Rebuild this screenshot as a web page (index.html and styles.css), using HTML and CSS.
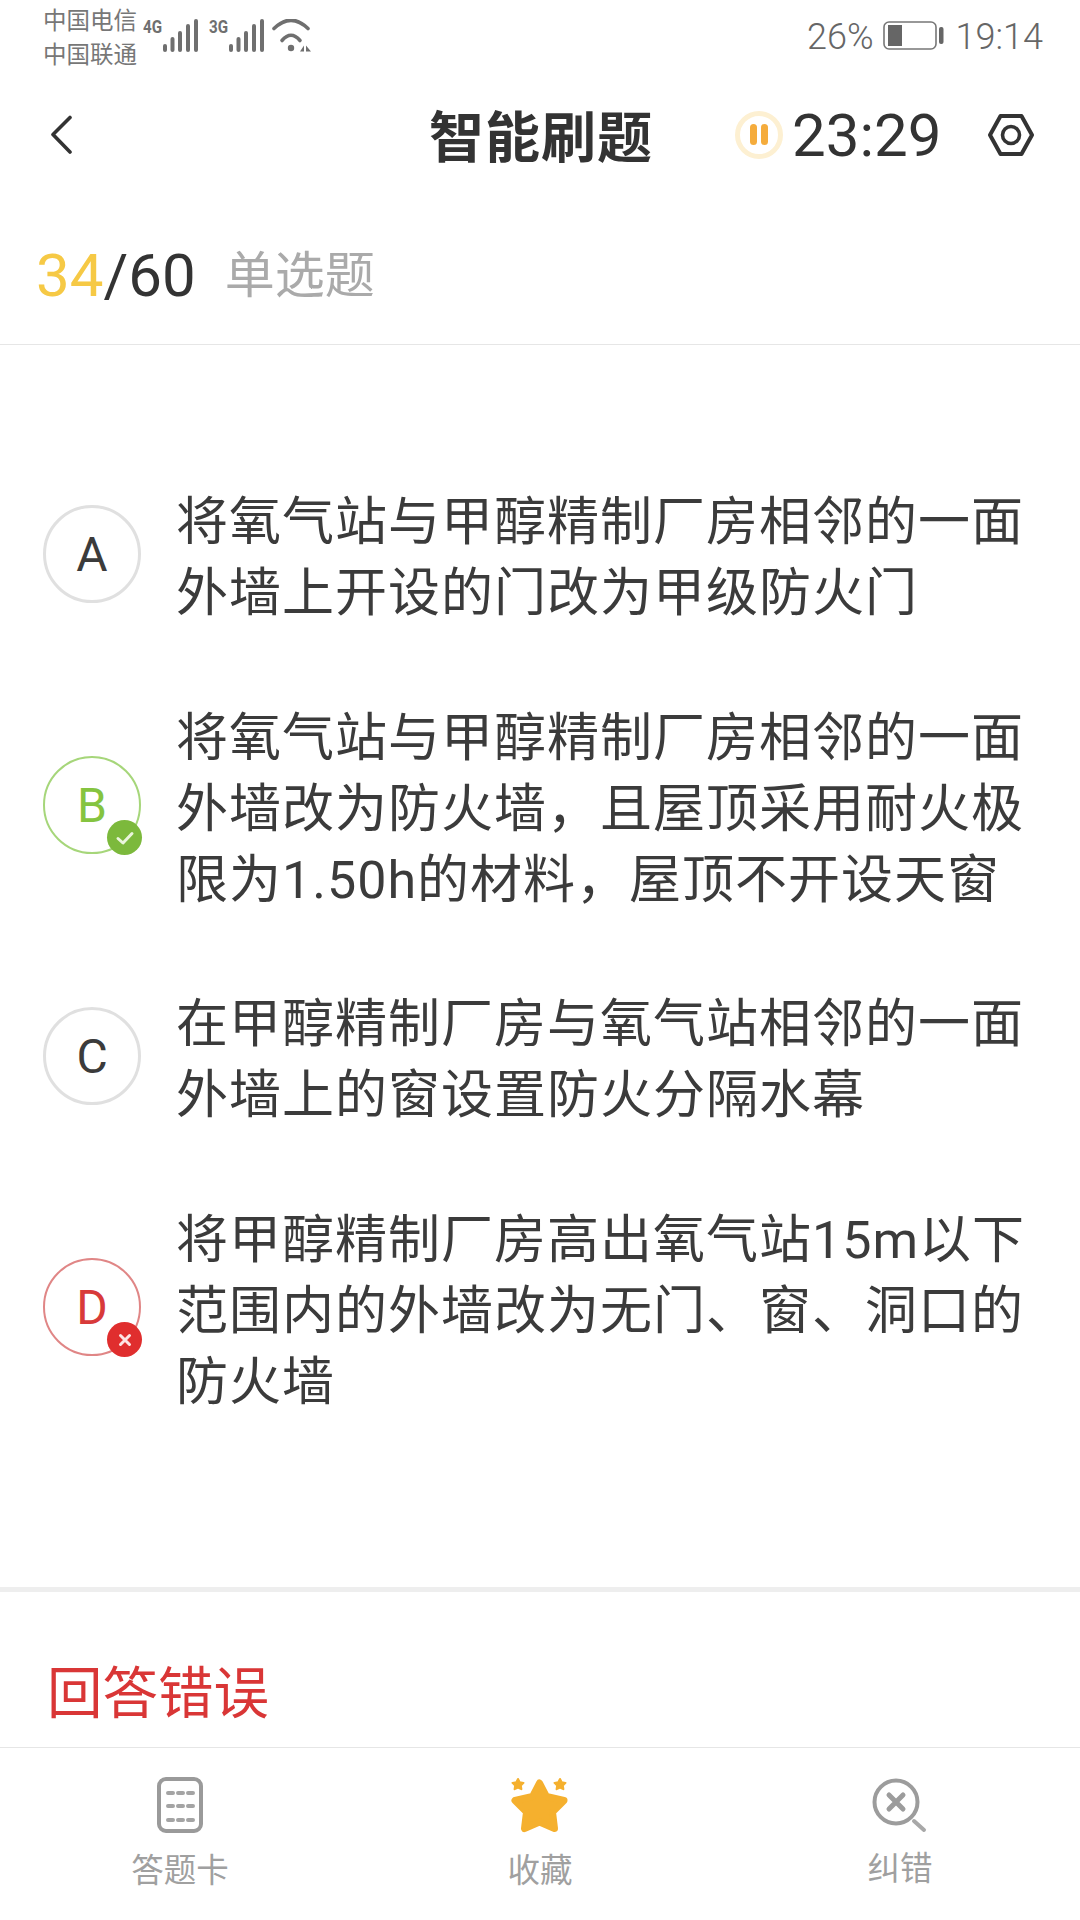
FILE: index.html
```html
<!DOCTYPE html>
<html lang="zh-CN">
<head>
<meta charset="utf-8">
<title>智能刷题</title>
<link rel="stylesheet" href="styles.css">
</head>
<body>
<div class="page">
  <div class="status">
    <div class="carriers"><span>中国电信</span><span>中国联通</span></div>
    <div class="net">
      <span class="gen">4G</span>
      <svg class="sig" width="38" height="36" viewBox="0 0 38 36"><g fill="#6f6f6f"><rect x="2" y="25" width="4" height="8" rx="2"/><rect x="9.500" y="18" width="4" height="15" rx="2"/><rect x="17" y="12" width="4" height="21" rx="2"/><rect x="25" y="5" width="4" height="28" rx="2"/><rect x="33" y="0" width="4" height="33" rx="2"/></g></svg>
      <span class="gen gen2">3G</span>
      <svg class="sig" width="38" height="36" viewBox="0 0 38 36"><g fill="#6f6f6f"><rect x="2" y="25" width="4" height="8" rx="2"/><rect x="9.500" y="18" width="4" height="15" rx="2"/><rect x="17" y="12" width="4" height="21" rx="2"/><rect x="25" y="5" width="4" height="28" rx="2"/><rect x="33" y="0" width="4" height="33" rx="2"/></g></svg>
      <svg class="wifi" width="44" height="36" viewBox="0 0 44 36"><g fill="none" stroke="#6f6f6f" stroke-width="3.600" stroke-linecap="round"><path d="M4 9.500Q21 -7 38 9.500"/><path d="M12 21.500Q21 11 30 21.500"/></g><circle cx="21" cy="29" r="3.200" fill="#6f6f6f"/><path d="M30 32.500l4-6v6zM36 26.500l5 6h-5z" fill="#6f6f6f"/></svg>
    </div>
    <div class="sys">
      <span class="pct">26%</span>
      <svg class="bat" width="62" height="30" viewBox="0 0 62 30"><rect x="1" y="1" width="52" height="27" rx="5" fill="none" stroke="#777" stroke-width="1.600"/><rect x="5" y="4" width="14" height="21" fill="#666"/><rect x="56" y="6" width="4.500" height="17" rx="2" fill="#666"/></svg>
      <span>19:14</span>
    </div>
  </div>

  <header class="bar">
    <svg class="back" width="24" height="40" viewBox="0 0 24 40"><path d="M21 2.500L4 19.500L21 37" fill="none" stroke="#333" stroke-width="3.600" stroke-linecap="round" stroke-linejoin="round"/></svg>
    <h1 class="title">智能刷题</h1>
    <div class="timer">
      <span class="pause"><i></i><i></i></span>
      <span class="clock">23:29</span>
    </div>
    <svg class="nut" width="48" height="44" viewBox="0 0 48 44"><path d="M13.500 3H34.500L45 22L34.500 41H13.500L3 22Z" fill="none" stroke="#333" stroke-width="4" stroke-linejoin="round"/><circle cx="24" cy="22" r="8.500" fill="none" stroke="#333" stroke-width="3.600"/></svg>
  </header>

  <div class="progress">
    <span class="count"><b>34</b>/60</span>
    <span class="kind">单选题</span>
  </div>

  <section class="options">
    <div class="opt">
      <div class="mark">A</div>
      <p>将氧气站与甲醇精制厂房相邻的一面<br>外墙上开设的门改为甲级防火门</p>
    </div>
    <div class="opt">
      <div class="mark ok">B
        <span class="badge ok-b"><svg width="22" height="22" viewBox="0 0 22 22"><path d="M4 11.500L9 16L18 6.500" fill="none" stroke="#eaf5dc" stroke-width="3" stroke-linecap="round" stroke-linejoin="round"/></svg></span>
      </div>
      <p>将氧气站与甲醇精制厂房相邻的一面<br>外墙改为防火墙，且屋顶采用耐火极<br>限为1.50h的材料，屋顶不开设天窗</p>
    </div>
    <div class="opt">
      <div class="mark">C</div>
      <p>在甲醇精制厂房与氧气站相邻的一面<br>外墙上的窗设置防火分隔水幕</p>
    </div>
    <div class="opt">
      <div class="mark bad">D
        <span class="badge bad-b"><svg width="16" height="16" viewBox="0 0 16 16"><path d="M3.500 3.500L12.500 12.500M12.500 3.500L3.500 12.500" fill="none" stroke="#fde4e4" stroke-width="3" stroke-linecap="round"/></svg></span>
      </div>
      <p>将甲醇精制厂房高出氧气站15m以下<br>范围内的外墙改为无门、窗、洞口的<br>防火墙</p>
    </div>
  </section>

  <div class="result">回答错误</div>

  <nav class="tabs">
    <div class="tab">
      <svg width="50" height="58" viewBox="0 0 50 58"><rect x="4" y="3" width="42" height="52" rx="7" fill="none" stroke="#9a9a9a" stroke-width="4"/><g stroke="#a4a4a4" stroke-width="4" stroke-linecap="round"><path d="M13 17h5M23 17h5M33 17h5M13 30h5M23 30h5M33 30h5M13 44h5M23 44h5M33 44h5"/></g></svg>
      <span>答题卡</span>
    </div>
    <div class="tab">
      <svg width="60" height="58" viewBox="0 0 60 58"><g fill="#f5b02e" stroke="#f5b02e" stroke-linejoin="round"><path stroke-width="7" d="M29.500 7L36.500 20.500L54 24.500L42.500 36L44.500 52.500L29.500 46L14.500 52.500L16.500 36L5 24.500L22.500 20.500Z"/><path stroke-width="2" d="M8 3L9.700 6.300L13.500 6.900L10.800 9.500L11.400 13.200L8 11.500L4.600 13.200L5.200 9.500L2.500 6.900L6.300 6.300Z"/><path stroke-width="2" d="M50 3L51.700 6.300L55.500 6.900L52.800 9.500L53.400 13.200L50 11.500L46.600 13.200L47.200 9.500L44.500 6.900L48.300 6.300Z"/></g></svg>
      <span>收藏</span>
    </div>
    <div class="tab tab-tight">
      <svg width="60" height="58" viewBox="0 0 60 58"><circle cx="26" cy="26" r="21.500" fill="none" stroke="#9c9c9c" stroke-width="4"/><path d="M19 19L33 33M33 19L19 33" stroke="#9c9c9c" stroke-width="5" stroke-linecap="round"/><path d="M44 45L54 54" stroke="#a8a8a8" stroke-width="4" stroke-linecap="round"/></svg>
      <span>纠错</span>
    </div>
  </nav>
</div>
</body>
</html>
```

FILE: styles.css
```css
* { box-sizing: border-box; }
html, body { margin: 0; padding: 0; background: #fff; }
body { font-family: Roboto, "Noto Sans CJK SC", sans-serif; }
.page { width: 1080px; height: 1920px; overflow: hidden; display: flex; flex-direction: column; background: #fff; }

.status { height: 72px; display: flex; align-items: flex-start; padding: 3px 37px 0 43px; color: #777; }
.carriers { display: flex; flex-direction: column; font-size: 23.500px; line-height: 34px; width: 100px; flex: none; padding-top: 1px; }
.net { display: flex; align-items: flex-start; padding-top: 16px; }
.gen { font: 700 19px/18px "Roboto", sans-serif; color: #6f6f6f; width: 19px; margin-top: -1px; margin-right: -1px; transform: scaleX(.8); transform-origin: left center; }
.gen2 { margin-left: 10px; }
.sig { display: block; }
.wifi { display: block; margin-left: 5px; }
.sys { margin-left: auto; display: flex; align-items: center; gap: 11px; font-size: 36px; font-weight: 300; line-height: 40px; padding-top: 14px; color: #666; }
.pct { margin-right: -2px; }
.bat { display: block; margin-top: -2px; }

.bar { height: 125px; display: flex; align-items: center; padding: 0 0 0 49px; position: relative; }
.back { display: block; flex: none; }
.title { margin: 0 0 0 356px; padding-top: 7px; font-size: 55px; font-weight: 700; color: #333; line-height: 70px; letter-spacing: 1px; white-space: nowrap; }
.timer { display: flex; align-items: center; margin-left: 82px; }
.pause { width: 48px; height: 48px; border-radius: 50%; border: 5px solid #fdf0d2; display: flex; align-items: center; justify-content: center; gap: 4px; }
.pause i { width: 7px; height: 21px; border-radius: 4px; background: #f5ac3c; }
.clock { font-size: 60px; line-height: 70px; color: #333; margin-left: 9px; padding-top: 2px; }
.nut { display: block; margin-left: 46px; }

.progress { height: 148px; border-bottom: 1px solid #e6e6e6; display: flex; align-items: center; padding: 10px 0 0 36px; }
.count { font-size: 60px; line-height: 70px; color: #333; }
.count b { font-weight: 400; color: #f6c945; }
.kind { font-size: 50px; line-height: 70px; color: #aaa; margin-left: 29px; }

.options { height: 1247px; flex: none; border-bottom: 5px solid #eee; padding: 142px 0 0 43px; display: flex; flex-direction: column; gap: 73.600px; }
.opt { display: flex; align-items: center; gap: 35px; }
.opt p { margin: 0; font-size: 52px; line-height: 71px; letter-spacing: 1px; color: #3b3b3b; white-space: nowrap; }
.mark { position: relative; width: 98px; height: 98px; flex: none; margin-bottom: 8px; border: 3px solid #e0e0e0; border-radius: 50%; display: flex; align-items: center; justify-content: center; font-size: 48px; font-weight: 400; color: #3b3b3b; }
.mark.ok { color: #85c440; border: 2px solid #a6d67a; }
.mark.bad { color: #d83a3a; border: 2px solid #e08686; }
.badge { position: absolute; right: -3px; bottom: -3px; width: 35px; height: 35px; border-radius: 50%; display: flex; align-items: center; justify-content: center; }
.badge svg { display: block; }
.ok-b { background: #7cb93c; }
.bad-b { background: #e02e2e; }

.result { height: 156px; flex: none; border-bottom: 1px solid #e6e6e6; padding: 0 0 0 47px; font-size: 55.500px; line-height: 206px; color: #d93636; overflow: hidden; }

.tabs { flex: 1; display: grid; grid-template-columns: repeat(3, 360px); }
.tab { display: flex; flex-direction: column; align-items: center; padding-top: 28px; gap: 15px; font-size: 32.500px; line-height: 44px; color: #a0a0a0; }
.tab-tight { gap: 13px; }
.tab svg { display: block; }
```
